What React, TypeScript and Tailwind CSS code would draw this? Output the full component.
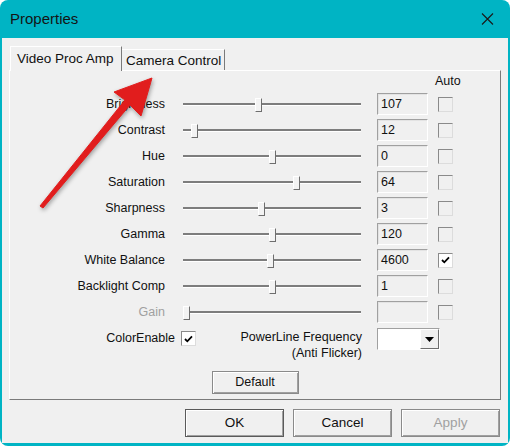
import React from 'react';

type Setting = {
  label: string;
  value: string;
  thumb: number; // thumb centre, px from track start
  auto?: boolean;
  disabled?: boolean;
};

const settings: Setting[] = [
  { label: 'Brightness', value: '107', thumb: 75 },
  { label: 'Contrast', value: '12', thumb: 11 },
  { label: 'Hue', value: '0', thumb: 89 },
  { label: 'Saturation', value: '64', thumb: 113 },
  { label: 'Sharpness', value: '3', thumb: 78 },
  { label: 'Gamma', value: '120', thumb: 89 },
  { label: 'White Balance', value: '4600', thumb: 87, auto: true },
  { label: 'Backlight Comp', value: '1', thumb: 89 },
  { label: 'Gain', value: '', thumb: 3, disabled: true },
];

const CheckMark: React.FC = () => (
  <svg width="9" height="8" viewBox="0 0 9 8" className="block">
    <path d="M1 4 L3.3 6.3 L8 1.3" fill="none" stroke="#000" strokeWidth="1.8" />
  </svg>
);

const CheckBox: React.FC<{ checked?: boolean; white?: boolean }> = ({ checked, white }) => (
  <div
    className={`w-[15px] h-[15px] flex items-center justify-center border border-t-[#8a8a8a] border-l-[#8a8a8a] border-r-[#dcdcdc] border-b-[#dcdcdc] ${
      checked || white ? 'bg-white' : 'bg-[#f0f0f0]'
    }`}
  >
    {checked && <CheckMark />}
  </div>
);

const Slider: React.FC<{ thumb: number }> = ({ thumb }) => (
  <div className="relative w-[178px] h-[14px] flex items-center">
    <div className="w-full h-[2px] bg-[#7d7d7d] shadow-[0_1px_0_#ffffff]" />
    <div
      className="absolute top-[1px] w-[7px] h-[14px] bg-[#f3f3f3] border border-t-white border-l-white border-r-[#6e6e6e] border-b-[#6e6e6e]"
      style={{ left: thumb - 3 }}
    />
  </div>
);

const Button: React.FC<{ label: string; w: string; h: string; strong?: boolean; disabled?: boolean }> = ({
  label,
  w,
  h,
  strong,
  disabled,
}) => (
  <div
    className={`${w} ${h} flex items-center justify-center border bg-[#f0f0f0] shadow-[inset_1px_1px_0_#ffffff,inset_-1px_-1px_0_#a0a0a0] ${
      strong ? 'border-[#5a5a5a]' : 'border-[#8a8a8a]'
    } ${disabled ? 'text-[#a0a0a0]' : 'text-[#111]'}`}
  >
    {label}
  </div>
);

const App: React.FC = () => {
  return (
    <div className="w-[510px] h-[446px] bg-white" style={{ fontFamily: '"Liberation Sans", Arial, sans-serif' }}>
      <div className="relative w-full h-full rounded-[8px] bg-[#00b4c4] flex flex-col px-[2px] pb-[3px] overflow-hidden">
        {/* title bar */}
        <div className="h-[38px] flex items-center justify-between pl-[8px] pr-[14px]">
          <span className="text-[15px] text-[#141414]">Properties</span>
          <svg width="13" height="12" viewBox="0 0 13 12">
            <path d="M1 0.5 L12 11.5 M12 0.5 L1 11.5" stroke="#1a1a1a" strokeWidth="1.1" />
          </svg>
        </div>

        {/* dialog body */}
        <div className="flex-1 bg-[#f0f0f0] px-[7px] pt-[8px] flex flex-col text-[12.5px] text-[#111]">
          {/* tabs */}
          <div className="h-[24px] flex items-end text-[13.5px]">
            <div className="relative z-10 -mb-px ml-[1px] w-[112px] h-[25px] bg-[#f0f0f0] border-t border-l border-r border-t-white border-l-white border-r-[#7a7a7a] pl-[6px] pt-[2px]">
              Video Proc Amp
            </div>
            <div className="w-[103px] h-[21px] border-t border-r border-t-white border-r-[#7a7a7a] pl-[4px] pt-[1px]">
              Camera Control
            </div>
          </div>

          {/* tab page */}
          <div className="h-[330px] border border-t-white border-l-white border-r-[#7a7a7a] border-b-[#7a7a7a] flex flex-col">
            <div className="h-[20px] flex items-center">
              <span className="ml-[425px]">Auto</span>
            </div>

            {settings.map((s) => (
              <div key={s.label} className="h-[26px] flex items-center">
                <div className={`w-[155px] text-right ${s.disabled ? 'text-[#a0a0a0]' : ''}`}>{s.label}</div>
                <div className="ml-[18px]">
                  <Slider thumb={s.thumb} />
                </div>
                <div className="ml-[16px] w-[51px] h-[22px] border border-t-[#a0a0a0] border-l-[#a0a0a0] border-r-white border-b-white shadow-[inset_1px_1px_0_#e3e3e3] pl-[3px] flex items-center">
                  {s.value}
                </div>
                <div className="ml-[10px]">
                  <CheckBox checked={s.auto} />
                </div>
              </div>
            ))}

            {/* color enable / powerline */}
            <div className="mt-[3px] h-[43px] flex items-start">
              <div className="w-[165px] text-right mt-[2px] leading-[16px]">ColorEnable</div>
              <div className="ml-[6px] mt-[3px]">
                <CheckBox checked />
              </div>
              <div className="w-[166px] text-right mt-[1px] leading-[16px]">
                <div>PowerLine Frequency</div>
                <div>(Anti Flicker)</div>
              </div>
              <div className="ml-[15px] w-[63px] h-[22px] bg-white border border-t-[#a0a0a0] border-l-[#a0a0a0] border-r-white border-b-white flex justify-end">
                <div className="w-[19px] h-full bg-[#f0f0f0] border border-t-white border-l-white border-r-[#6e6e6e] border-b-[#6e6e6e] flex items-center justify-center">
                  <svg width="9" height="5" viewBox="0 0 9 5">
                    <path d="M0 0 H9 L4.5 5 Z" fill="#000" />
                  </svg>
                </div>
              </div>
            </div>

            <div className="flex justify-center">
              <Button label="Default" w="w-[87px]" h="h-[23px]" />
            </div>
          </div>

          {/* dialog buttons */}
          <div className="mt-[9px] flex justify-end gap-[9px] mr-[1px] text-[13.5px]">
            <Button label="OK" w="w-[99px]" h="h-[28px]" strong />
            <Button label="Cancel" w="w-[99px]" h="h-[28px]" />
            <Button label="Apply" w="w-[99px]" h="h-[28px]" disabled />
          </div>
        </div>

        {/* red annotation arrow */}
        <svg
          className="absolute inset-0 pointer-events-none"
          width="510"
          height="446"
          viewBox="0 0 510 446"
          style={{ filter: 'drop-shadow(1px 2px 2px rgba(0,0,0,0.35))' }}
        >
          <polygon
            points="40,206 125,100 114,92 152,78 141,116 130,105 43,208"
            fill="#e11d1d"
            stroke="#e11d1d"
            strokeWidth="1"
            strokeLinejoin="round"
          />
        </svg>
      </div>
    </div>
  );
};

export default App;
